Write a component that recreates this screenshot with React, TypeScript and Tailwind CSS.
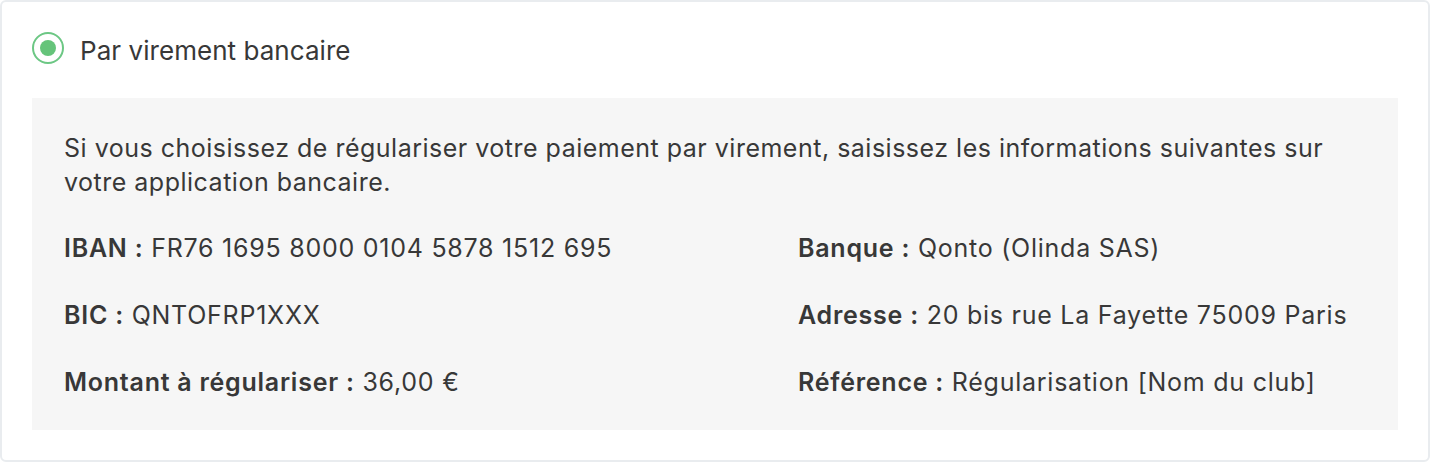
import React from "react";

const rows: [string, string][][] = [
  [
    ["IBAN", "FR76 1695 8000 0104 5878 1512 695"],
    ["Banque", "Qonto (Olinda SAS)"],
  ],
  [
    ["BIC", "QNTOFRP1XXX"],
    ["Adresse", "20 bis rue La Fayette 75009 Paris"],
  ],
  [
    ["Montant à régulariser", "36,00 €"],
    ["Référence", "Régularisation [Nom du club]"],
  ],
];

function Field({ label, value }: { label: string; value: string }) {
  return (
    <p className="leading-[34px] whitespace-nowrap tracking-[0.75px]">
      <span className="font-semibold">{label} :</span> {value}
    </p>
  );
}

export default function App() {
  return (
    <div
      className="w-[1430px] h-[462px] bg-white text-[#383838]"
      style={{ fontFamily: "Inter, 'Liberation Sans', sans-serif" }}
    >
      <div className="h-full rounded-[6px] border-2 border-[#e9ecef] px-[30px] pt-[30px]">
        {/* radio header */}
        <div className="flex items-start gap-[16px] h-[32px]">
          <div className="w-[32px] h-[32px] shrink-0 rounded-full border-2 border-[#6cc784] flex items-center justify-center">
            <div className="w-[16px] h-[16px] rounded-full bg-[#65c47a]" />
          </div>
          <span className="pt-[3px] text-[26px] leading-[32px] tracking-[0.05px]">Par virement bancaire</span>
        </div>

        <div className="mt-[34px] bg-[#f6f6f6] px-[32px] pt-[33px] pb-[31px] text-[25px]">
          <p className="leading-[34px] tracking-[0.5px]">
            Si vous choisissez de régulariser votre paiement par virement, saisissez les informations suivantes sur
            votre application bancaire.
          </p>
          <div className="mt-[32px] flex flex-col gap-[33px]">
            {rows.map((r, i) => (
              <div key={i} className="grid grid-cols-[734px_1fr]">
                <Field label={r[0][0]} value={r[0][1]} />
                <Field label={r[1][0]} value={r[1][1]} />
              </div>
            ))}
          </div>
        </div>
      </div>
    </div>
  );
}
